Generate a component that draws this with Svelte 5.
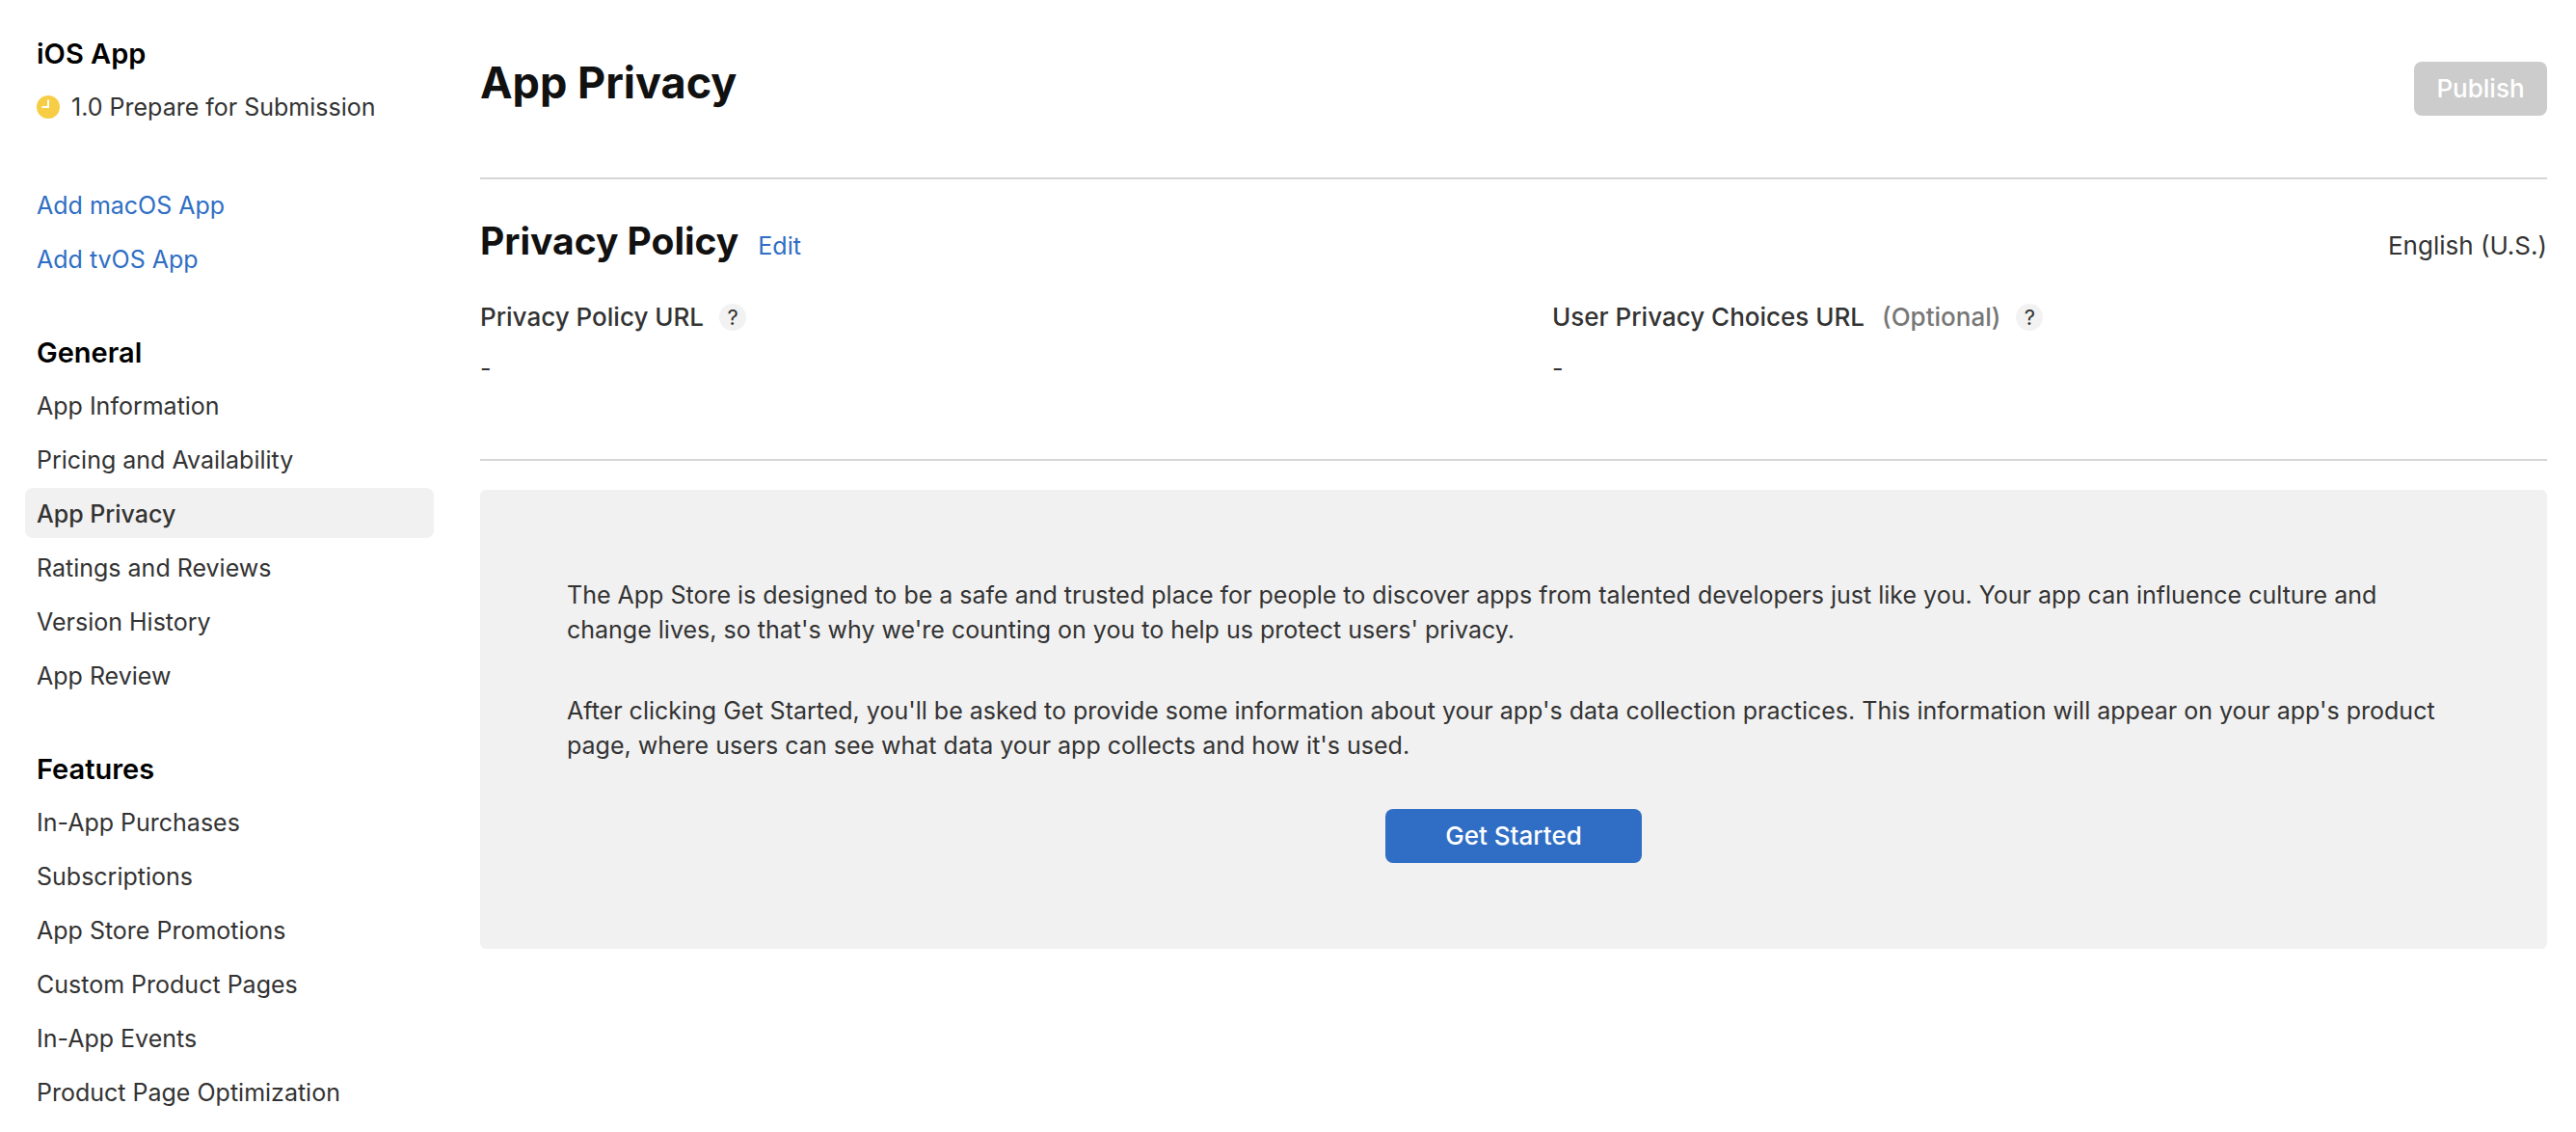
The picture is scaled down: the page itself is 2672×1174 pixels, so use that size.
<script>
  const general = ['App Information', 'Pricing and Availability', 'App Privacy', 'Ratings and Reviews', 'Version History', 'App Review'];
  const features = ['In-App Purchases', 'Subscriptions', 'App Store Promotions', 'Custom Product Pages', 'In-App Events', 'Product Page Optimization'];
  const groups = [{ title: 'General', items: general }, { title: 'Features', items: features }];
  const active = 'App Privacy';
</script>

<div class="page">
  <nav class="sidebar" aria-label="App sections">
    <section>
      <h3>iOS App</h3>
      <a class="item" href="#version">
        <svg class="status" viewBox="0 0 24 24" aria-hidden="true">
          <circle cx="12" cy="12" r="12" fill="#f7cd46" />
          <path d="M12 4.5V12H5.5" fill="none" stroke="#fff" stroke-width="2" />
        </svg>
        1.0 Prepare for Submission
      </a>
    </section>
    <section class="add">
      <a class="item link" href="#macos">Add macOS App</a>
      <a class="item link" href="#tvos">Add tvOS App</a>
    </section>
    {#each groups as group}
      <section>
        <h3>{group.title}</h3>
        {#each group.items as item}
          <a class="item" class:active={item === active} href="#{item.replaceAll(' ', '-')}">{item}</a>
        {/each}
      </section>
    {/each}
  </nav>

  <main>
    <header>
      <h1>App Privacy</h1>
      <button class="publish" disabled>Publish</button>
    </header>

    <section class="policy">
      <div class="title-row">
        <h2>Privacy Policy</h2>
        <a class="link" href="#edit">Edit</a>
        <span class="language">English (U.S.)</span>
      </div>
      <dl>
        <div>
          <dt>Privacy Policy URL <button class="help" aria-label="About the privacy policy URL">?</button></dt>
          <dd>-</dd>
        </div>
        <div>
          <dt>User Privacy Choices URL <span class="optional">(Optional)</span> <button class="help" aria-label="About the user privacy choices URL">?</button></dt>
          <dd>-</dd>
        </div>
      </dl>
    </section>

    <section class="intro">
      <p>The App Store is designed to be a safe and trusted place for people to discover apps from talented developers just like you. Your app can influence culture and change lives, so that's why we're counting on you to help us protect users' privacy.</p>
      <p>After clicking Get Started, you'll be asked to provide some information about your app's data collection practices. This information will appear on your app's product page, where users can see what data your app collects and how it's used.</p>
      <button class="start">Get Started</button>
    </section>
  </main>
</div>

<style>
  :global(body) { background: #fff; }
  .page {
    display: grid;
    grid-template-columns: 424px minmax(0, 1fr);
    column-gap: 48px;
    padding: 28px 30px 0 26px;
    font: 25px/36px Inter, "Liberation Sans", sans-serif;
    color: #333;
  }
  h1, h2, h3, p, dl, dd { margin: 0; }
  h1, h2 { color: #111; font-weight: 700; }
  a { color: inherit; text-decoration: none; }
  button { font: inherit; border: 0; padding: 0; }
  .sidebar { display: flex; flex-direction: column; gap: 40px; }
  .add { padding-top: 6px; }
  h3 { font-size: 29px; line-height: 56px; font-weight: 600; padding-left: 12px; color: #000; }
  .item { display: flex; align-items: center; box-sizing: border-box; height: 52px; margin-bottom: 4px; padding: 2px 12px 0; border-radius: 8px; }
  .item.active { background: #f1f1f1; font-weight: 500; }
  .status { width: 24px; height: 24px; margin-right: 12px; }
  .link { color: #2f6ec4; }
  header { display: flex; justify-content: space-between; align-items: flex-start; padding: 28px 0 64px; border-bottom: 2px solid #d6d6d6; }
  h1 { font-size: 45px; line-height: 60px; }
  .publish { width: 138px; height: 56px; margin-top: 8px; border-radius: 8px; background: #ccc; color: #fff; font-size: 26px; font-weight: 500; }
  .policy { padding: 39px 0 76px; border-bottom: 2px solid #d6d6d6; }
  .title-row { display: flex; align-items: baseline; gap: 20px; }
  h2 { font-size: 39px; line-height: 50px; }
  .language { margin-left: auto; font-size: 26px; }
  dl { display: grid; grid-template-columns: 1fr 1fr; column-gap: 80px; margin-top: 36px; }
  dt { display: flex; align-items: center; gap: 16px; font-size: 26px; font-weight: 500; }
  dd { margin-top: 17px; }
  .optional { margin-left: 2px; color: #777; }
  .help { width: 28px; height: 28px; border-radius: 50%; background: #f2f2f2; font-size: 22px; line-height: 28px; font-weight: 400; color: #333; }
  .intro { display: flex; flex-direction: column; margin-top: 30px; padding: 91px 90px 89px; background: #f1f1f1; border-radius: 6px; }
  .intro p { margin-bottom: 48px; }
  .start { align-self: center; width: 266px; height: 56px; border-radius: 8px; background: #2f6ec4; color: #fff; font-size: 26px; font-weight: 500; }
</style>
